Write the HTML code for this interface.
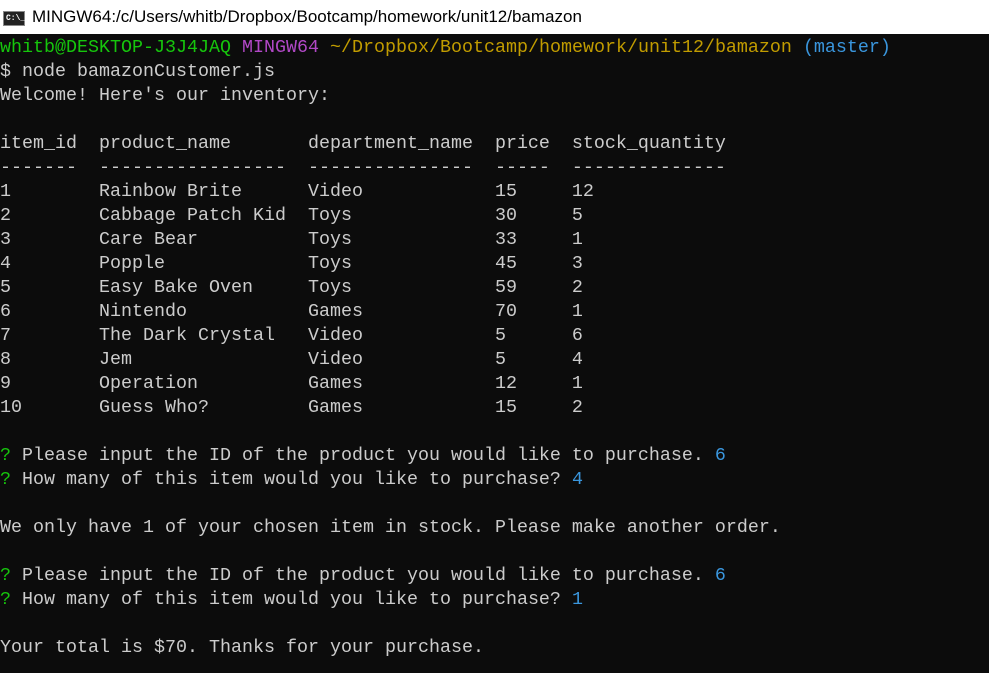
<!DOCTYPE html>
<html><head><style>
html,body{margin:0;padding:0;width:989px;height:673px;overflow:hidden;background:#0c0c0c}
.t{height:34px;background:#fff;position:relative;font-family:"Liberation Sans",sans-serif;font-size:17px;color:#000}
.t span{position:absolute;left:32px;top:7px}
.ic{position:absolute;left:3px;top:11px;width:22px;height:15px;background:#222;border:1px solid #888;box-sizing:border-box;color:#fff;font:bold 8px "Liberation Mono",monospace;line-height:13px;padding-left:2px}
pre{margin:0;padding:0;font-family:"Liberation Mono",monospace;font-size:18.33px;line-height:24px;color:#cccccc;position:absolute;top:36px;left:0}
.g{color:#16c60c}.p{color:#b148c6}.y{color:#c19c00}.b{color:#3a96dd}
</style></head><body>
<div class="t"><div class="ic">C:\_</div><span>MINGW64:/c/Users/whitb/Dropbox/Bootcamp/homework/unit12/bamazon</span></div>
<pre><span class="g">whitb@DESKTOP-J3J4JAQ</span> <span class="p">MINGW64</span> <span class="y">~/Dropbox/Bootcamp/homework/unit12/bamazon</span> <span class="b">(master)</span>
$ node bamazonCustomer.js
Welcome! Here's our inventory:

item_id  product_name       department_name  price  stock_quantity
-------  -----------------  ---------------  -----  --------------
1        Rainbow Brite      Video            15     12
2        Cabbage Patch Kid  Toys             30     5
3        Care Bear          Toys             33     1
4        Popple             Toys             45     3
5        Easy Bake Oven     Toys             59     2
6        Nintendo           Games            70     1
7        The Dark Crystal   Video            5      6
8        Jem                Video            5      4
9        Operation          Games            12     1
10       Guess Who?         Games            15     2

<span class="g">?</span> Please input the ID of the product you would like to purchase. <span class="b">6</span>
<span class="g">?</span> How many of this item would you like to purchase? <span class="b">4</span>

We only have 1 of your chosen item in stock. Please make another order.

<span class="g">?</span> Please input the ID of the product you would like to purchase. <span class="b">6</span>
<span class="g">?</span> How many of this item would you like to purchase? <span class="b">1</span>

Your total is $70. Thanks for your purchase.</pre>
</body></html>
